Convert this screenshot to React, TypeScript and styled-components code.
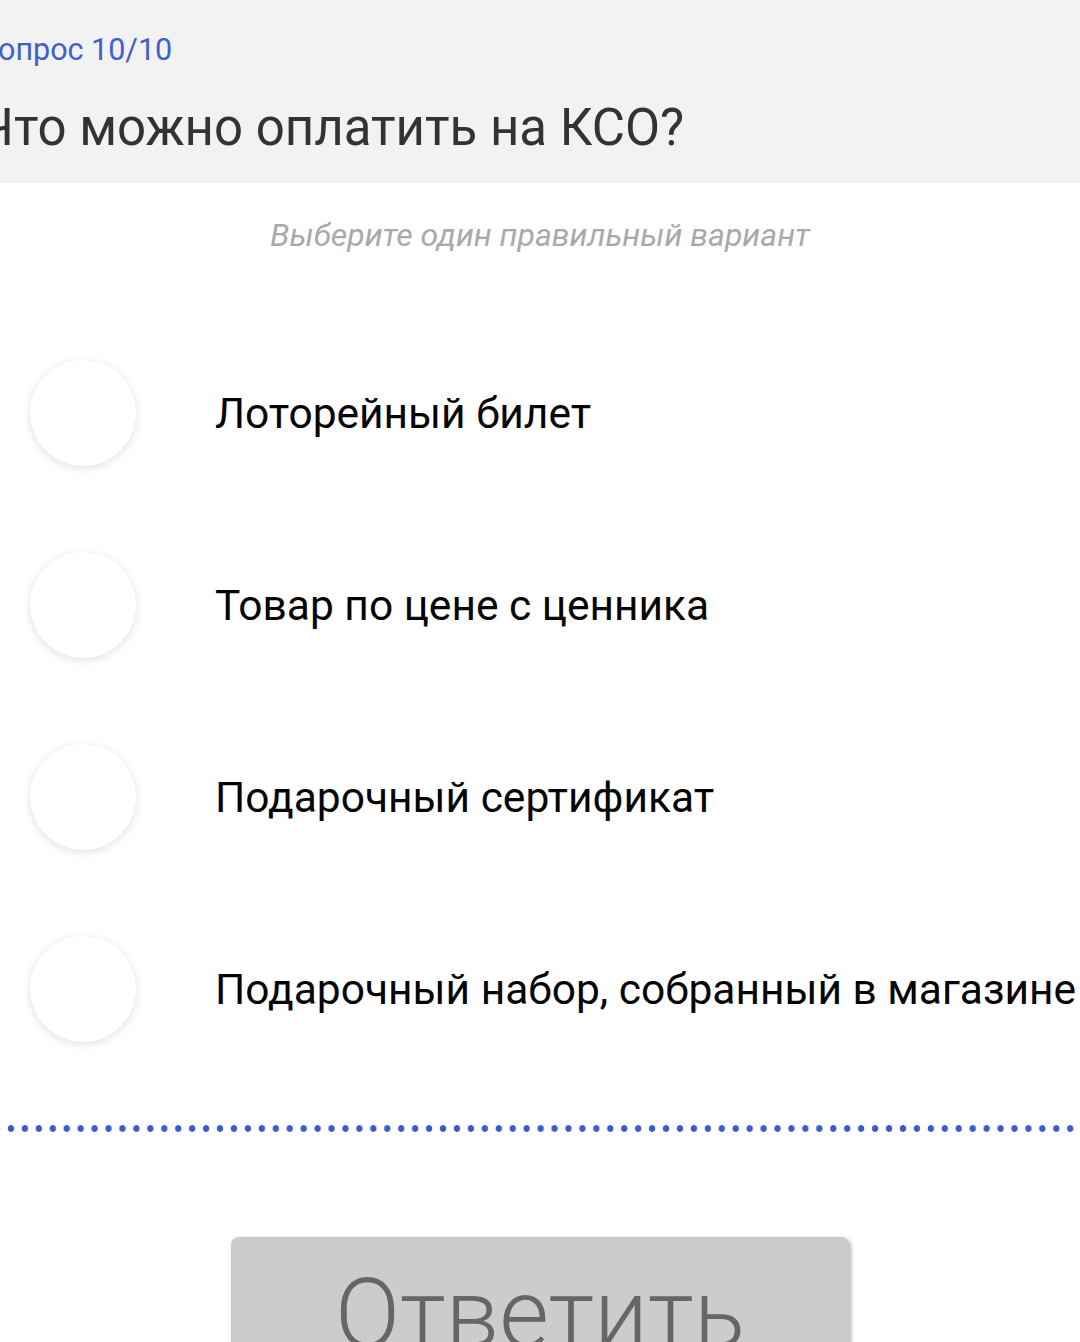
import styled, { createGlobalStyle } from 'styled-components'

const Global = createGlobalStyle`
    html, body {
        margin: 0;
        padding: 0;
        background: #ffffff;
        overflow: hidden;
    }
    body {
        font-family: Roboto, "Noto Sans", sans-serif;
    }
`

const options = [
    'Лоторейный билет',
    'Товар по цене с ценника',
    'Подарочный сертификат',
    'Подарочный набор, собранный в магазине',
]

export default function App() {
    return (
        <Page>
            <Global />
            <Header>
                <Counter>Вопрос 10/10</Counter>
                <Question>Что можно оплатить на КСО?</Question>
            </Header>
            <Hint>Выберите один правильный вариант</Hint>
            <Options>
                {options.map((text) => (
                    <Option key={text}>
                        <Radio />
                        <Label>{text}</Label>
                    </Option>
                ))}
            </Options>
            <Dots />
            <Footer>
                <Submit type="button" disabled>Ответить</Submit>
            </Footer>
        </Page>
    )
}

const Page = styled.div`
    width: 1080px;
    height: 1342px;
    overflow: hidden;
    display: flex;
    flex-direction: column;

    & > * {
        flex-shrink: 0;
    }
`

const Header = styled.div`
    background: #f2f2f2;
    height: 183px;
    box-sizing: border-box;
    padding-top: 30px;
    margin-left: -21px;
`

const Counter = styled.div`
    font-size: 30.5px;
    line-height: 40px;
    color: #3f5fce;
`

const Question = styled.h1`
    margin: 28px 0 0;
    font-size: 51px;
    line-height: 60px;
    font-weight: 400;
    color: #333333;
    white-space: nowrap;
`

const Hint = styled.div`
    margin-top: 32px;
    text-align: center;
    font-size: 32px;
    line-height: 40px;
    font-style: italic;
    color: #a9a9ad;
`

const Options = styled.div`
    margin-top: 62px;
    display: flex;
    flex-direction: column;
`

const Option = styled.label`
    height: 192px;
    display: flex;
    align-items: center;
    padding-left: 30px;
    gap: 79px;
`

const Radio = styled.span`
    flex: none;
    width: 106px;
    height: 106px;
    border-radius: 50%;
    background: #ffffff;
    box-shadow: 0 2px 9px rgba(0, 0, 0, 0.13);
`

const Label = styled.span`
    font-size: 42.5px;
    color: #050505;
    white-space: nowrap;
`

const Dots = styled.div`
    margin-top: 40px;
    height: 7px;
    background-image: radial-gradient(circle, #3a5bd0 3px, transparent 3.6px);
    background-size: 13.95px 7px;
    background-position: 4px 0;
    background-repeat: repeat-x;
`

const Footer = styled.div`
    margin-top: 105px;
    display: flex;
    justify-content: center;
`

const Submit = styled.button`
    width: 618px;
    height: 200px;
    box-sizing: border-box;
    padding: 20px 0 0;
    border: none;
    border-radius: 8px;
    background: #cccccc;
    box-shadow: 2px 2px 4px rgba(0, 0, 0, 0.3);
    font-family: Roboto, "Noto Sans", sans-serif;
    font-weight: 300;
    font-size: 96px;
    line-height: 1.2;
    color: #666666;
    display: flex;
    justify-content: center;
    align-items: flex-start;
`
